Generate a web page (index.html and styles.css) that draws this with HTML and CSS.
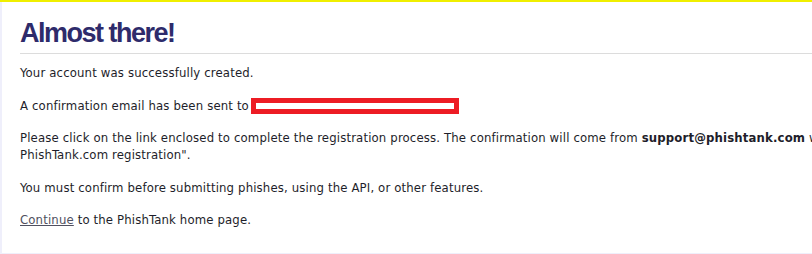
FILE: index.html
```html
<!DOCTYPE html>
<html lang="en">
<head>
	<meta charset="UTF-8">
	<title>Almost there! - PhishTank</title>
	<link rel="stylesheet" href="styles.css">
</head>
<body>
	<div class="topbar"></div>
	<div class="page">
		<div class="content">
			<h1 class="title">Almost there!</h1>

			<p>Your account was successfully created.</p>

			<p>A confirmation email has been sent to<span class="redacted"></span></p>

			<p>Please click on the link enclosed to complete the registration process. The confirmation will come from <b>support@phishtank.com</b> with the subject "Your PhishTank.com registration".</p>

			<p>You must confirm before submitting phishes, using the API, or other features.</p>

			<p><a href="#">Continue</a> to the PhishTank home page.</p>
		</div>
	</div>
</body>
</html>
```

FILE: styles.css
```css
html,
body {
	margin: 0;
	padding: 0;
}

html {
	overflow-x: hidden;
}

body {
	background: #efeffb;
	font-family: "DejaVu Sans", Verdana, sans-serif;
	font-stretch: condensed;
	font-size: 13px;
	line-height: 17px;
	letter-spacing: 0.15px;
	color: #1e1e2a;
	width: 1100px;
}

.topbar {
	height: 2px;
	background: #f0ef00;
}

.page {
	margin-left: 2px;
	background: #fff;
	padding: 16px 0 9px 18px;
}

.content {
	width: 970px;
}

.title {
	margin: 0;
	padding-bottom: 4px;
	border-bottom: 1px solid #dcdcdc;
	font-family: "Liberation Sans", Arial, sans-serif;
	font-stretch: normal;
	font-size: 27px;
	line-height: 31px;
	letter-spacing: -1.5px;
	font-weight: bold;
	color: #2e2b6b;
}

.content p {
	margin: 10px 0 15.5px;
}

.redacted {
	display: inline-block;
	width: 198px;
	height: 6px;
	margin-left: 2px;
	border: 5px solid #ed1c24;
	vertical-align: -4px;
}

a {
	color: #505060;
}
```
